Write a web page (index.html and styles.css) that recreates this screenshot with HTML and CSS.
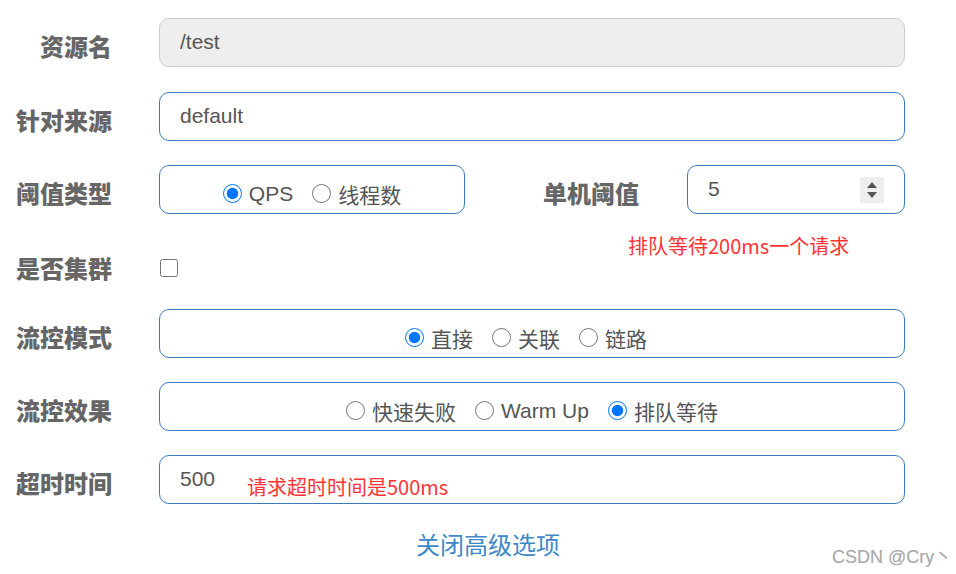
FILE: index.html
```html
<!DOCTYPE html>
<html lang="zh">
  <head>
    <meta charset="UTF-8" />
    <title>流控规则</title>
    <link rel="stylesheet" href="styles.css">
  </head>
  <body>
    <div class="form">
      <div class="row">
        <label class="label">资源名</label>
        <div class="field">
          <input class="input disabled" type="text" value="/test" disabled />
        </div>
      </div>

      <div class="row">
        <label class="label">针对来源</label>
        <div class="field">
          <input class="input" type="text" value="default" />
        </div>
      </div>

      <div class="row">
        <label class="label">阈值类型</label>
        <div class="field split">
          <div class="box small">
            <label class="opt"><input type="radio" name="grade" checked />QPS</label>
            <label class="opt"><input type="radio" name="grade" />线程数</label>
          </div>
          <label class="label inner">单机阈值</label>
          <div class="number">
            <span class="num-value">5</span>
            <span class="spin">
              <svg width="14" height="22" viewBox="0 0 14 22">
                <path d="M2 9 L7 3 L12 9 Z" fill="#555" />
                <path d="M2 13 L7 19 L12 13 Z" fill="#555" />
              </svg>
            </span>
          </div>
        </div>
        <span class="note note-queue">排队等待200ms一个请求</span>
      </div>

      <div class="row row-check">
        <label class="label">是否集群</label>
        <div class="field">
          <input class="check" type="checkbox" />
        </div>
      </div>

      <div class="row">
        <label class="label">流控模式</label>
        <div class="field">
          <div class="box shifted">
            <label class="opt"><input type="radio" name="strategy" checked />直接</label>
            <label class="opt"><input type="radio" name="strategy" />关联</label>
            <label class="opt"><input type="radio" name="strategy" />链路</label>
          </div>
        </div>
      </div>

      <div class="row">
        <label class="label">流控效果</label>
        <div class="field">
          <div class="box">
            <label class="opt"><input type="radio" name="behavior" />快速失败</label>
            <label class="opt"><input type="radio" name="behavior" />Warm Up</label>
            <label class="opt"><input type="radio" name="behavior" checked />排队等待</label>
          </div>
        </div>
      </div>

      <div class="row">
        <label class="label">超时时间</label>
        <div class="field timeout">
          <input class="input" type="text" value="500" />
          <span class="note note-timeout">请求超时时间是500ms</span>
        </div>
      </div>

      <div class="row row-link">
        <a class="toggle" href="#">关闭高级选项</a>
      </div>
    </div>
    <span class="watermark">CSDN @Cry丶</span>
  </body>
</html>
```

FILE: styles.css
```css
body {
  margin: 0;
  font-family: "Liberation Sans", Arial, "Noto Sans CJK SC", sans-serif;
  color: #555;
  background: white;
  width: 956px;
  height: 574px;
  overflow: hidden;
  position: relative;
}
.form {
  display: flex;
  flex-direction: column;
  padding-top: 18px;
}
.row {
  display: flex;
  align-items: center;
  height: 49px;
  margin-bottom: 24px;
  position: relative;
}
.row:first-child {
  margin-bottom: 25px;
}
.label {
  width: 112px;
  flex: none;
  text-align: right;
  font-family: "Noto Sans CJK SC", sans-serif;
  font-weight: 900;
  font-size: 24px;
  color: #666;
  margin-right: 47px;
  padding-top: 6px;
}
.field {
  width: 746px;
  height: 49px;
  display: flex;
  align-items: center;
}
.input {
  box-sizing: border-box;
  width: 100%;
  height: 49px;
  border: 1px solid #3a7bbf;
  border-radius: 10px;
  padding: 0 20px 1px;
  font-family: "Liberation Sans", Arial, sans-serif;
  font-size: 21px;
  color: #555;
  background: white;
  outline: none;
}
.input.disabled {
  background: #eee;
  border-color: #ccc;
}
.split {
  justify-content: space-between;
}
.box {
  box-sizing: border-box;
  width: 100%;
  height: 49px;
  border: 1px solid #3a7bbf;
  border-radius: 10px;
  display: flex;
  align-items: center;
  justify-content: center;
  gap: 19px;
  padding-top: 8px;
}
.box.shifted {
  padding-right: 12px;
}
.box.small {
  width: 306px;
  flex: none;
}
.opt {
  display: flex;
  align-items: center;
  font-family: "Liberation Sans", Arial, "Noto Sans CJK SC", sans-serif;
  font-size: 21px;
  color: #555;
}
.opt input {
  width: 19px;
  height: 19px;
  margin: 0 7px 0 0;
  accent-color: #0075ff;
}
.label.inner {
  width: auto;
  margin: 0 48px 0 0;
  margin-left: auto;
}
.number {
  box-sizing: border-box;
  width: 218px;
  height: 49px;
  border: 1px solid #3a7bbf;
  border-radius: 10px;
  display: flex;
  align-items: center;
  justify-content: space-between;
  padding: 0 20px 2px;
  font-size: 21px;
}
.spin {
  display: flex;
  align-items: center;
  justify-content: center;
  width: 24px;
  height: 26px;
  background: #eee;
  margin-top: 2px;
}
.note {
  position: absolute;
  color: #f33;
  font-family: "Noto Sans CJK SC", sans-serif;
  font-size: 20px;
  white-space: nowrap;
}
.note-queue {
  left: 628px;
  top: 66px;
}
.row-check {
  margin-top: 5px;
  margin-bottom: 17px;
}
.row-check .label {
  padding-top: 0;
}
.check {
  width: 18px;
  height: 18px;
  margin: 0 0 0 1px;
  accent-color: #0075ff;
}
.timeout {
  position: relative;
}
.note-timeout {
  left: 88px;
  top: 17px;
}
.row-link {
  height: 40px;
  margin: -5px 0 0;
  padding-left: 416px;
}
.toggle {
  font-family: "Noto Sans CJK SC", sans-serif;
  font-size: 24px;
  color: #3d88c8;
  text-decoration: none;
}
.watermark {
  position: absolute;
  left: 832px;
  top: 542px;
  font-size: 18px;
  color: #aaa;
  text-shadow: 0 0 1px #ddd;
}
```
